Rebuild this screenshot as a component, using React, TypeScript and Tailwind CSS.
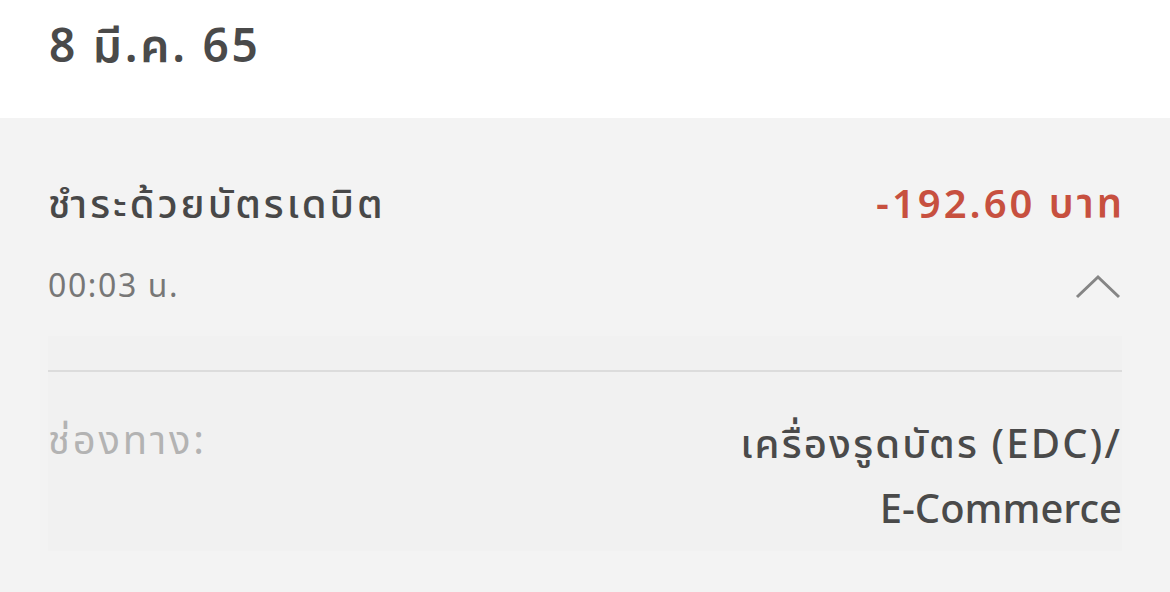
export default function App() {
  const font = {
    fontFamily: '"Noto Sans Thai", "Noto Sans", "Open Sans", sans-serif',
  };

  return (
    <div className="w-[1170px] h-[592px] overflow-hidden bg-[#f3f3f3]" style={font}>
      {/* date header */}
      <div className="h-[118px] bg-white px-[49px] flex items-center">
        <h1 className="text-[46px] font-semibold tracking-[0.06em] text-[#4a4a4a] leading-none -mt-[22px]">
          8 มี.ค. 65
        </h1>
      </div>

      {/* transaction */}
      <div className="px-[48px] pt-[68px]">
        <div className="flex items-center justify-between">
          <span className="text-[40px] font-medium tracking-[0.075em] text-[#484848] leading-none">
            ชำระด้วยบัตรเดบิต
          </span>
          <span className="text-[40px] font-semibold tracking-[0.075em] text-[#c7503f] leading-none -mr-[3px]">
            -192.60 บาท
          </span>
        </div>
        <div className="mt-[45px] flex items-center justify-between">
          <span className="text-[32px] tracking-[0.05em] text-[#777777] leading-none">00:03 น.</span>
          <svg width="46" height="26" viewBox="0 0 46 26" className="mr-[1px]">
            <path d="M2 23 L23 3 L44 23" fill="none" stroke="#858585" strokeWidth="3" />
          </svg>
        </div>

        {/* details */}
        <div className="mt-[33px] bg-[#f1f1f1]">
          <div className="h-[36px] border-b-2 border-[#dcdcdc]" />
          <div className="flex justify-between pt-[42px] pb-[7px]">
            <span className="text-[40px] tracking-[0.07em] text-[#b3b3b3] leading-[65px] -mt-[4px]">ช่องทาง:</span>
            <span className="text-[40px] font-medium text-[#4a4a4a] leading-[65px] text-right">
              <span className="tracking-[0.055em]">เครื่องรูดบัตร (EDC)/</span>
              <br />
              E-Commerce
            </span>
          </div>
        </div>
      </div>
    </div>
  );
}
